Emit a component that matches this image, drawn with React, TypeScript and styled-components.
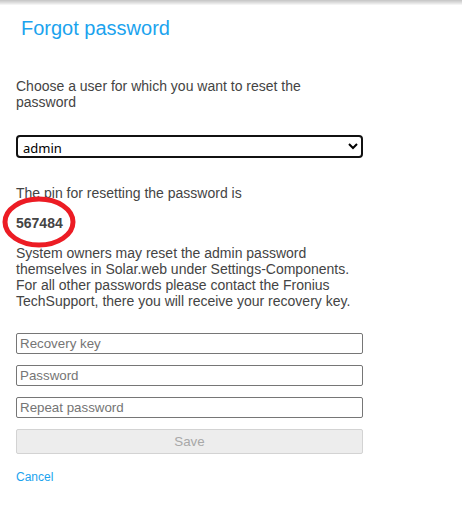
import React from "react";
import styled, { createGlobalStyle } from "styled-components";

const Global = createGlobalStyle`
  html, body { margin: 0; padding: 0; background: #fff; }
  body { font-family: "Liberation Sans", Arial, sans-serif; }
`;

const Page = styled.div`
  width: 462px;
  min-height: 520px;
  background: #fff;
  position: relative;
`;

const TopShadow = styled.div`
  height: 5px;
  background: linear-gradient(#c4c4c4, #e2e2e2 60%, #fafafa);
`;

const Content = styled.div`
  padding: 0 16px;
  width: 347px;
`;

const Title = styled.h1`
  margin: 0;
  padding: 11px 0 0 5px;
  font-size: 20px;
  font-weight: normal;
  line-height: 24px;
  color: #1ba3ee;
`;

const Text = styled.p<{ $top: number }>`
  margin: ${(p) => p.$top}px 0 0;
  font-size: 14px;
  line-height: 16px;
  color: #444;
`;

const Pin = styled.div`
  position: relative;
  margin-top: 14px;
  font-size: 14px;
  line-height: 16px;
  font-weight: bold;
  color: #444;
`;

const Ring = styled.svg`
  position: absolute;
  left: -16px;
  top: -22px;
  overflow: visible;
`;

const Select = styled.select`
  display: block;
  margin-top: 25px;
  width: 347px;
  height: 23px;
  box-sizing: border-box;
  border: 2px solid #111;
  border-radius: 4px;
  padding: 1px 1px;
  font-family: "Noto Sans", "Liberation Sans", sans-serif;
  font-size: 13px;
  line-height: 17px;
  color: #000;
  background: #fff;
  outline: none;
`;

const Fields = styled.div`
  margin-top: 24px;
  display: flex;
  flex-direction: column;
  gap: 11px;
`;

const Input = styled.input`
  display: block;
  width: 347px;
  height: 21px;
  box-sizing: border-box;
  border: 1px solid #767676;
  border-radius: 2px;
  padding: 0 3px;
  font-family: "Liberation Sans", Arial, sans-serif;
  font-size: 13.333px;
  color: #333;
  &::placeholder { color: #757575; }
`;

const SaveButton = styled.button`
  display: block;
  width: 347px;
  height: 25px;
  box-sizing: border-box;
  border: 1px solid #d3d3d3;
  border-radius: 2px;
  background: #ededed;
  color: #a8a8a8;
  font-family: "Liberation Sans", Arial, sans-serif;
  font-size: 13.333px;
`;

const Cancel = styled.a`
  display: block;
  margin-top: 16px;
  font-size: 12px;
  line-height: 14px;
  color: #1ba3ee;
  text-decoration: none;
  cursor: pointer;
`;

export default function App() {
  return (
    <Page>
      <Global />
      <TopShadow />
      <Content>
        <Title>Forgot password</Title>
        <Text $top={38}>Choose a user for which you want to reset the password</Text>
        <Select defaultValue="admin">
          <option value="admin">admin</option>
          <option value="service">service</option>
        </Select>
        <Text $top={27}>The pin for resetting the password is</Text>
        <Pin>
          567484
          <Ring width="80" height="60" viewBox="0 0 80 60">
            <ellipse cx="39" cy="29" rx="34" ry="23" fill="none" stroke="#ec1c24" strokeWidth="5" />
          </Ring>
        </Pin>
        <Text $top={14}>
          System owners may reset the admin password themselves in Solar.web under Settings-Components.
          For all other passwords please contact the Fronius TechSupport, there you will receive your
          recovery key.
        </Text>
        <Fields>
          <Input placeholder="Recovery key" />
          <Input type="password" placeholder="Password" />
          <Input type="password" placeholder="Repeat password" />
          <SaveButton disabled>Save</SaveButton>
        </Fields>
        <Cancel>Cancel</Cancel>
      </Content>
    </Page>
  );
}
